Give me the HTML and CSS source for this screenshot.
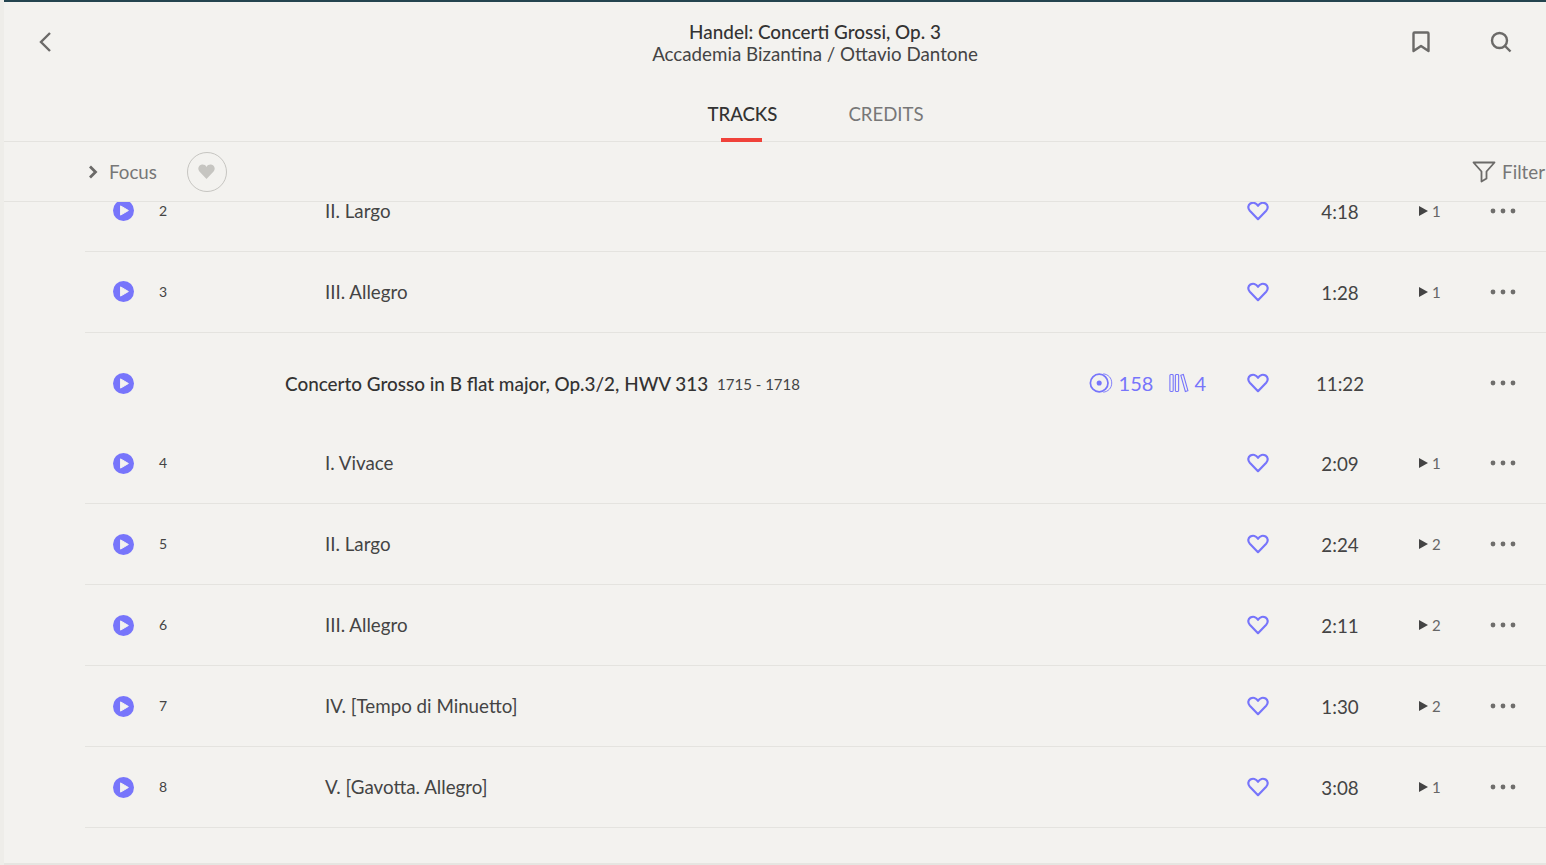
FILE: index.html
```html
<!DOCTYPE html>
<html>
<head>
  <title>Handel: Concerti Grossi, Op. 3</title>
  <link rel="stylesheet" href="styles.css">
</head>
<body>
  <svg class="icon-defs" width="0" height="0">
    <symbol id="play" viewBox="0 0 21 21">
      <circle cx="10.5" cy="10.5" r="10.5" fill="#7775fb"/>
      <path d="M7.6 5.9 L15.4 10.5 L7.6 15.1 Z" fill="#f3f2ef" stroke="#f3f2ef" stroke-linejoin="round"/>
    </symbol>
    <symbol id="heart" viewBox="0 0 24 22">
      <path d="M12 20 L3 10.8 C0.4 8 1.1 4.3 3.6 2.8 C6.3 1.2 9.9 1.9 12 5.2 C14.1 1.9 17.7 1.2 20.4 2.8 C22.9 4.3 23.6 8 21 10.8 Z" fill="none" stroke="#7775fb" stroke-width="2.4" stroke-linejoin="round"/>
    </symbol>
    <symbol id="dots" viewBox="0 0 26 6">
      <circle cx="3" cy="3" r="2.4" fill="#6f6e6c"/>
      <circle cx="13" cy="3" r="2.4" fill="#6f6e6c"/>
      <circle cx="23" cy="3" r="2.4" fill="#6f6e6c"/>
    </symbol>
  </svg>

  <div class="page">
    <header class="top">
      <button class="top-btn back">
        <svg width="14" height="22" viewBox="0 0 14 22"><path d="M12 2 L3 11 L12 20" fill="none" stroke="#6b6a68" stroke-width="2.4"/></svg>
      </button>
      <div class="album">
        <div class="album-title">Handel: Concerti Grossi, Op. 3</div>
        <div class="album-artist">Accademia Bizantina / Ottavio Dantone</div>
      </div>
      <div class="top-actions">
        <svg width="18" height="22" viewBox="0 0 18 22"><path d="M1.500 2.500 Q1.500 1.500 2.500 1.500 L15.500 1.500 Q16.500 1.500 16.500 2.500 L16.500 20 L9 15 L1.500 20 Z" fill="none" stroke="#6b6a68" stroke-width="2.400" stroke-linejoin="round"/></svg>
        <svg width="22" height="22" viewBox="0 0 22 22"><circle cx="9.500" cy="9.500" r="7.500" fill="none" stroke="#6b6a68" stroke-width="2.400"/><path d="M15 15 L20.500 20.500" stroke="#6b6a68" stroke-width="2.400"/></svg>
      </div>
    </header>

    <nav class="tabs">
      <a class="tab active">TRACKS</a>
      <a class="tab">CREDITS</a>
    </nav>

    <div class="filters">
      <svg class="focus-arrow" width="10" height="14" viewBox="0 0 10 14"><path d="M2 1.500 L7.500 7 L2 12.500" fill="none" stroke="#6b6a68" stroke-width="2.800"/></svg>
      <span class="focus">Focus</span>
      <span class="focus-heart">
        <svg width="17" height="15" viewBox="0 0 24 21"><path d="M12 21 L2 10.500 C-1 7 0.500 2 4.500 0.800 C7.500 0 10.500 1 12 4 C13.500 1 16.500 0 19.500 0.800 C23.500 2 25 7 22 10.500 Z" fill="#c6c5c1"/></svg>
      </span>
      <span class="filter">
        <svg width="24" height="22" viewBox="0 0 24 22"><path d="M1.500 1.500 L22.500 1.500 L14.500 10.500 L14.500 17.500 L9.500 20.500 L9.500 10.500 Z" fill="none" stroke="#6b6a68" stroke-width="1.800" stroke-linejoin="round"/></svg>
        Filter
      </span>
    </div>

    <main class="list">
      <div class="list-inner">
        <div class="row line above">
          <svg class="play"><use href="#play"/></svg>
          <span class="num">2</span>
          <span class="title">II. Largo</span>
          <svg class="heart"><use href="#heart"/></svg>
          <span class="time">4:18</span>
          <span class="plays"><i class="tri"></i>1</span>
          <svg class="dots"><use href="#dots"/></svg>
        </div>
        <div class="row line above">
          <svg class="play"><use href="#play"/></svg>
          <span class="num">3</span>
          <span class="title">III. Allegro</span>
          <svg class="heart"><use href="#heart"/></svg>
          <span class="time">1:28</span>
          <span class="plays"><i class="tri"></i>1</span>
          <svg class="dots"><use href="#dots"/></svg>
        </div>
        <div class="row work">
          <svg class="play"><use href="#play"/></svg>
          <span class="num"></span>
          <span class="work-title">
            <b>Concerto Grosso in B flat major, Op.3/2, HWV 313</b>
            <small>1715 - 1718</small>
            <span class="stats">
              <svg width="24" height="20" viewBox="0 0 26 22"><circle cx="11" cy="11" r="9.700" fill="none" stroke="#7775fb" stroke-width="1.900"/><circle cx="11" cy="11" r="2.800" fill="#7775fb"/><path d="M15.500 0.900 C21 1.500 24.800 5.500 24.800 11 C24.800 16.500 21 20.500 15.500 21.100" fill="none" stroke="#7775fb" stroke-width="1"/></svg>
              <span class="stat-num">158</span>
              <svg class="stat-books" width="20" height="20" viewBox="0 0 22 20"><g fill="none" stroke="#7775fb" stroke-width="1.200"><rect x="1" y="0.700" width="3.600" height="18.600" rx="1"/><rect x="7" y="0.700" width="3.600" height="18.600" rx="1"/><path d="M13 1.500 L15.800 0.700 L20.800 18.500 L18 19.300 Z"/></g></svg>
              <span class="stat-num last">4</span>
            </span>
          </span>
          <svg class="heart"><use href="#heart"/></svg>
          <span class="time">11:22</span>
          <span class="plays"></span>
          <svg class="dots"><use href="#dots"/></svg>
        </div>
        <div class="row line">
          <svg class="play"><use href="#play"/></svg>
          <span class="num">4</span>
          <span class="title">I. Vivace</span>
          <svg class="heart"><use href="#heart"/></svg>
          <span class="time">2:09</span>
          <span class="plays"><i class="tri"></i>1</span>
          <svg class="dots"><use href="#dots"/></svg>
        </div>
        <div class="row line">
          <svg class="play"><use href="#play"/></svg>
          <span class="num">5</span>
          <span class="title">II. Largo</span>
          <svg class="heart"><use href="#heart"/></svg>
          <span class="time">2:24</span>
          <span class="plays"><i class="tri"></i>2</span>
          <svg class="dots"><use href="#dots"/></svg>
        </div>
        <div class="row line">
          <svg class="play"><use href="#play"/></svg>
          <span class="num">6</span>
          <span class="title">III. Allegro</span>
          <svg class="heart"><use href="#heart"/></svg>
          <span class="time">2:11</span>
          <span class="plays"><i class="tri"></i>2</span>
          <svg class="dots"><use href="#dots"/></svg>
        </div>
        <div class="row line">
          <svg class="play"><use href="#play"/></svg>
          <span class="num">7</span>
          <span class="title">IV. [Tempo di Minuetto]</span>
          <svg class="heart"><use href="#heart"/></svg>
          <span class="time">1:30</span>
          <span class="plays"><i class="tri"></i>2</span>
          <svg class="dots"><use href="#dots"/></svg>
        </div>
        <div class="row line">
          <svg class="play"><use href="#play"/></svg>
          <span class="num">8</span>
          <span class="title">V. [Gavotta. Allegro]</span>
          <svg class="heart"><use href="#heart"/></svg>
          <span class="time">3:08</span>
          <span class="plays"><i class="tri"></i>1</span>
          <svg class="dots"><use href="#dots"/></svg>
        </div>
      </div>
    </main>
  </div>
</body>
</html>
```

FILE: styles.css
```css
html,
body {
  margin: 0;
  height: 100%;
  overflow: hidden;
}

body {
  font-family: Lato, "Open Sans", sans-serif;
  color: #333;
  background-color: #eeede9;
  padding-left: 4px;
  box-sizing: border-box;
}

.icon-defs {
  display: block;
}

.page {
  height: 861px;
  background-color: #f3f2ef;
  border-top: 2px solid #24444f;
  border-bottom: 2px solid #e6e5e1;
  display: flex;
  flex-direction: column;
}

.top {
  display: flex;
  justify-content: space-between;
  height: 93px;
  flex: none;
  position: relative;
}

.top-btn {
  background: none;
  border: none;
  padding: 0;
}

.back {
  align-self: flex-start;
  margin: 29px 0 0 34px;
  height: 22px;
}

.album {
  position: absolute;
  left: 0;
  right: 0;
  top: 18px;
  padding-left: 80px;
  text-align: center;
  line-height: 23px;
}

.album-title {
  font-weight: 500;
  font-size: 18.9px;
  color: #333;
}

.album-artist {
  margin-top: -1px;
  font-size: 18.75px;
  color: #444;
}

.top-actions {
  display: flex;
  gap: 60px;
  align-items: flex-start;
  padding: 29px 34px 0 0;
}

.tabs {
  display: flex;
  justify-content: center;
  gap: 71px;
  height: 46px;
  flex: none;
  padding-left: 81px;
  border-bottom: 1px solid #e4e3df;
}

.tab {
  position: relative;
  font-size: 18.6px;
  line-height: 38px;
  color: #777;
}

.tab.active {
  font-weight: 500;
  color: #333;
}

.tab.active::after {
  content: "";
  position: absolute;
  left: 14px;
  right: 15px;
  bottom: -1px;
  height: 4px;
  background-color: #f0423a;
}

.filters {
  display: flex;
  align-items: center;
  height: 59px;
  flex: none;
  padding-left: 84px;
  border-bottom: 1px solid #e4e3df;
  font-size: 18.75px;
  color: #777;
}

.focus {
  margin-left: 11px;
}

.focus-heart {
  display: flex;
  align-items: center;
  justify-content: center;
  width: 38px;
  height: 38px;
  margin-left: 30px;
  border: 1px solid #c6c5c1;
  border-radius: 50%;
}

.filter {
  display: flex;
  align-items: center;
  gap: 6px;
  margin-left: auto;
  padding-right: 1px;
}

.list {
  flex: 1;
  overflow: hidden;
}

.list-inner {
  margin: -31px 0 0 81px;
}

.row {
  display: grid;
  grid-template-columns: 46px 126px 1fr 40px 124px 88px 56px;
  align-items: center;
  height: 80px;
  padding-left: 28px;
}

.row.line {
  border-bottom: 1px solid #e4e3df;
}

.row.work {
  padding-top: 10px;
}

.play {
  width: 21px;
  height: 21px;
}

.row.above .play {
  margin-top: -2px;
}

.num {
  margin-top: -2px;
  font-size: 14px;
  color: #444;
}

.title {
  margin-top: -2px;
  padding-left: 40px;
  font-size: 18.75px;
  color: #444;
}

.work-title {
  display: flex;
  align-items: center;
  padding-right: 32px;
  font-size: 18.9px;
}

.work-title b {
  font-weight: 500;
  color: #333;
}

.work-title small {
  margin: 1px 0 0 9px;
  font-size: 15px;
  color: #444;
}

.stats {
  display: flex;
  align-items: center;
  margin-left: auto;
  color: #7775fb;
  font-size: 20px;
}

.stat-num {
  margin-left: 6px;
}

.stat-num.last {
  margin-left: 5px;
}

.stat-books {
  margin-left: 16px;
}

.heart {
  justify-self: center;
  width: 22px;
  height: 20px;
}

.time {
  text-align: center;
  font-size: 18.75px;
  color: #444;
}

.plays {
  display: flex;
  align-items: center;
  padding-left: 17px;
  font-size: 15px;
  color: #666;
}

.tri {
  width: 0;
  height: 0;
  margin-right: 4px;
  border-left: 9px solid #444;
  border-top: 5px solid transparent;
  border-bottom: 5px solid transparent;
}

.dots {
  width: 26px;
  height: 6px;
  margin-top: -1px;
}
```
